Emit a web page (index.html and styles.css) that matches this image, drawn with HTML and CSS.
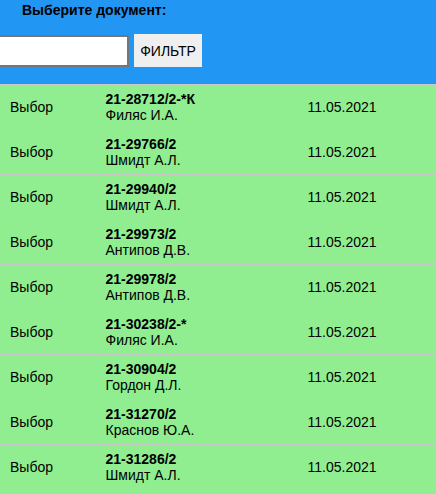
FILE: index.html
```html
<!DOCTYPE html>
<html>
<head>
<meta charset="utf-8">
<link rel="stylesheet" href="styles.css">
</head>
<body>
<div class="header">
  <div class="title">Выберите документ:</div>
  <div class="filter">
    <input class="search" type="text">
    <button class="btn">ФИЛЬТР</button>
  </div>
</div>
<table class="docs">
  <tr><td class="c1">Выбор</td><td class="c2"><b>21-28712/2-*К</b><br>Филяс И.А.</td><td class="c3">11.05.2021</td></tr>
  <tr><td class="c1">Выбор</td><td class="c2"><b>21-29766/2</b><br>Шмидт А.Л.</td><td class="c3">11.05.2021</td></tr>
  <tr><td class="c1">Выбор</td><td class="c2"><b>21-29940/2</b><br>Шмидт А.Л.</td><td class="c3">11.05.2021</td></tr>
  <tr><td class="c1">Выбор</td><td class="c2"><b>21-29973/2</b><br>Антипов Д.В.</td><td class="c3">11.05.2021</td></tr>
  <tr><td class="c1">Выбор</td><td class="c2"><b>21-29978/2</b><br>Антипов Д.В.</td><td class="c3">11.05.2021</td></tr>
  <tr><td class="c1">Выбор</td><td class="c2"><b>21-30238/2-*</b><br>Филяс И.А.</td><td class="c3">11.05.2021</td></tr>
  <tr><td class="c1">Выбор</td><td class="c2"><b>21-30904/2</b><br>Гордон Д.Л.</td><td class="c3">11.05.2021</td></tr>
  <tr><td class="c1">Выбор</td><td class="c2"><b>21-31270/2</b><br>Краснов Ю.А.</td><td class="c3">11.05.2021</td></tr>
  <tr><td class="c1">Выбор</td><td class="c2"><b>21-31286/2</b><br>Шмидт А.Л.</td><td class="c3">11.05.2021</td></tr>
</table>
</body>
</html>
```
FILE: styles.css
```css
html, body {
  margin: 0;
  padding: 0;
  background: #90ee90;
  font-family: "Liberation Sans", Arial, sans-serif;
  font-size: 14px;
  color: #000;
  overflow: hidden;
}
.header {
  background: #2196f3;
  height: 84px;
  box-sizing: border-box;
  padding-top: 2px;
}
.title {
  font-weight: bold;
  font-size: 14px;
  line-height: 16px;
  margin-left: 22px;
}
.filter {
  display: flex;
  align-items: flex-start;
  margin-top: 16px;
  margin-left: -30px;
  gap: 5px;
}
.search {
  width: 159px;
  height: 32px;
  box-sizing: border-box;
  margin: 1px 0 0 0;
  border: 2px solid #767676;
  border-radius: 0;
  background: #fff;
  padding: 0;
}
.btn {
  height: 33px;
  width: 68px;
  box-sizing: border-box;
  margin: 0;
  border: none;
  background: #efefef;
  font-family: "Liberation Sans", Arial, sans-serif;
  font-size: 14px;
  color: #000;
  padding: 0;
}
.docs {
  border-collapse: collapse;
  width: 436px;
  table-layout: fixed;
}
.docs td {
  border: 1px solid #c8c8c8;
  height: 45px;
  box-sizing: border-box;
  padding: 0 0 0 10px;
  vertical-align: middle;
  line-height: 16px;
}
.docs td.c1 { width: 95px; border-left: none; }
.docs td.c2 { width: 202px; }
```
